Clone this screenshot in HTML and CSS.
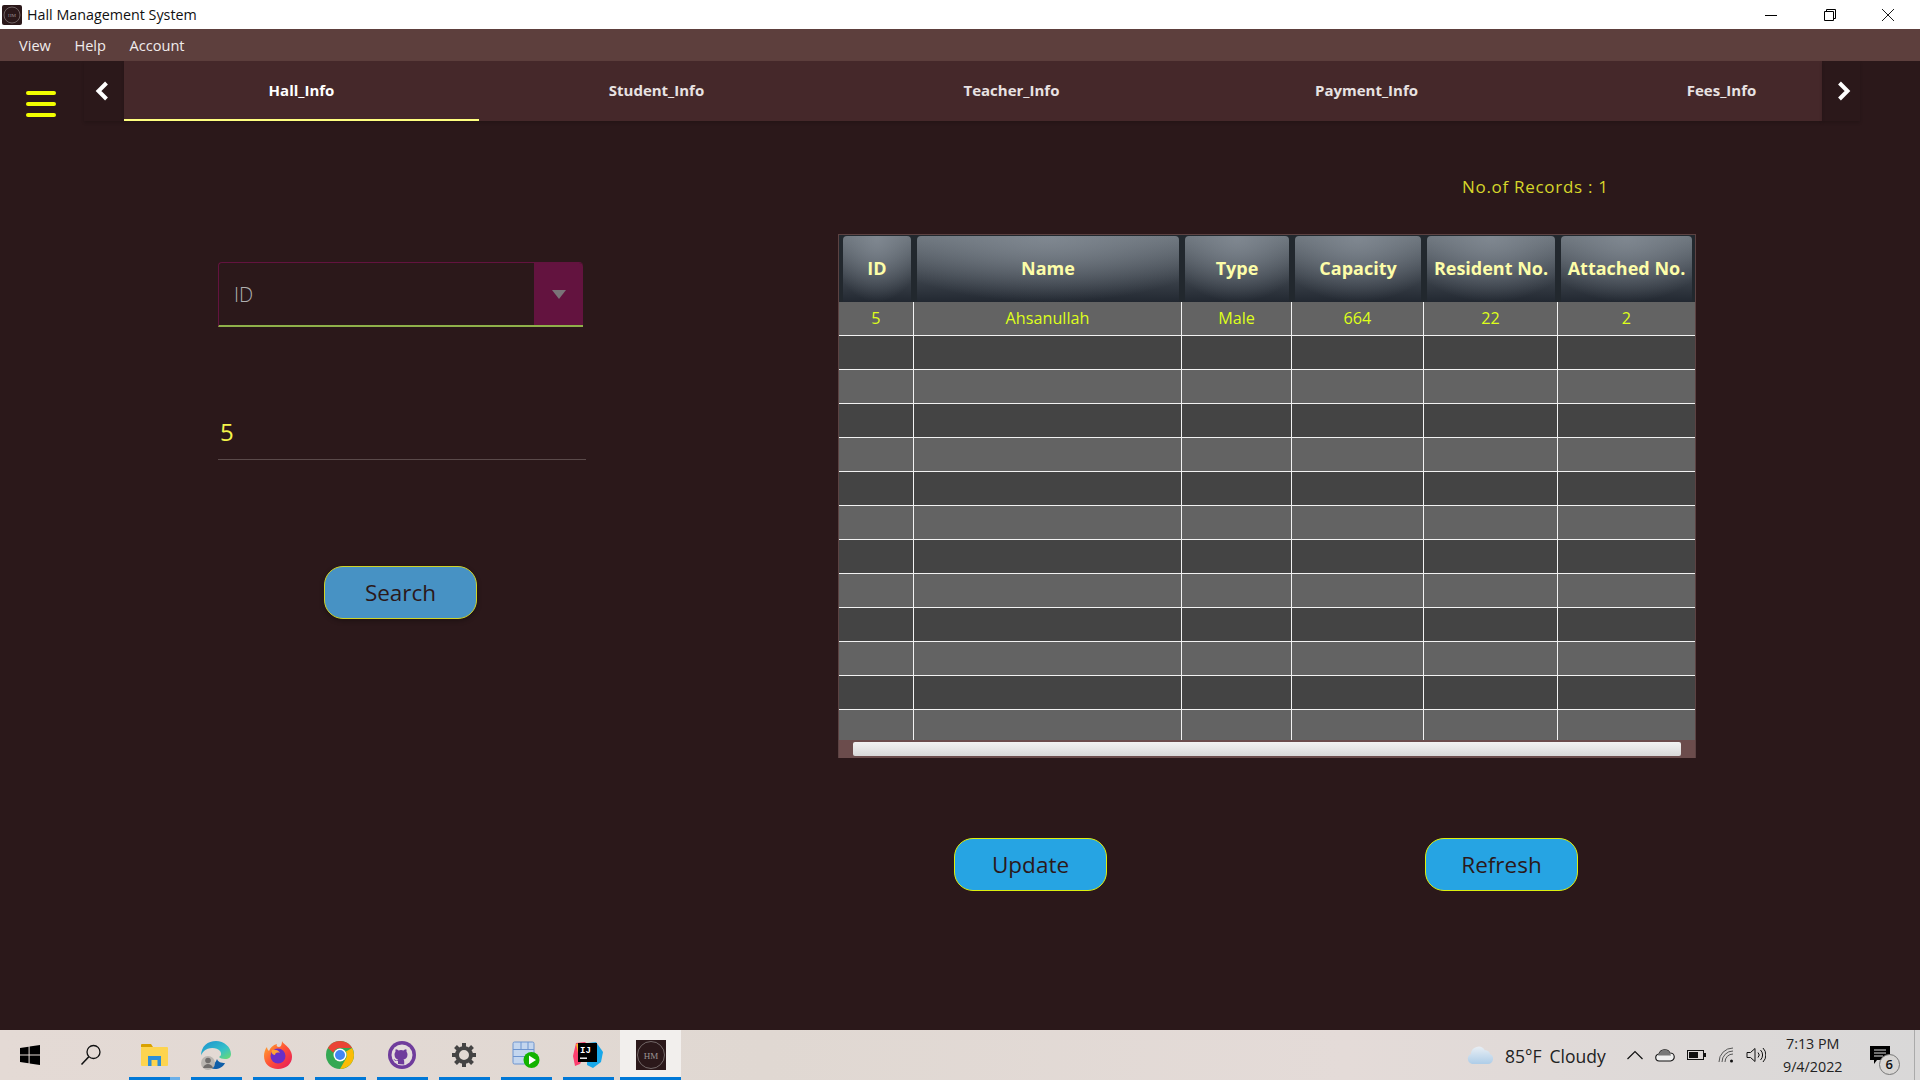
FILE: index.html

```html
<!DOCTYPE html>
<html lang="en">
<head>
  <meta charset="UTF-8">
  <title>Hall Management System</title>
  <link rel="stylesheet" href="styles.css">
</head>
<body>

  <div class="titlebar">
    <svg class="app-icon" viewBox="0 0 20 20">
      <rect width="20" height="20" rx="2" fill="#2b181a"/>
      <circle cx="10" cy="10" r="8" fill="none" stroke="#7d7373" stroke-width="0.8"/>
      <text x="10" y="12" font-size="5" text-anchor="middle" fill="#9a9090" font-family="Liberation Serif, serif">HM</text>
    </svg>
    <span class="app-title">Hall Management System</span>
    <div class="win-controls">
      <svg class="win-btn" viewBox="0 0 12 12"><path d="M0 6.5H12" stroke="#000" fill="none"/></svg>
      <svg class="win-btn" viewBox="0 0 12 12"><path d="M.5 2.5h9v9h-9zM2.5 2.5V.5h9v9h-2" stroke="#000" fill="none"/></svg>
      <svg class="win-btn" viewBox="0 0 12 12"><path d="M0 0L12 12M12 0L0 12" stroke="#000" stroke-width="0.9" fill="none"/></svg>
    </div>
  </div>

  <div class="menubar">
    <span class="menu-item">View</span>
    <span class="menu-item">Help</span>
    <span class="menu-item">Account</span>
  </div>

  <div class="tabrow">
    <div class="hamburger"><i></i><i></i><i></i></div>
    <div class="tab-arrow arrow-left">
      <svg viewBox="0 0 14 20" width="14" height="20"><path d="M11.500 2L3.500 10L11.500 18" fill="none" stroke="#fff" stroke-width="4"/></svg>
    </div>
    <div class="tabs">
      <div class="tab active">Hall_Info</div>
      <div class="tab">Student_Info</div>
      <div class="tab">Teacher_Info</div>
      <div class="tab">Payment_Info</div>
      <div class="tab">Fees_Info</div>
    </div>
    <div class="tab-arrow arrow-right">
      <svg viewBox="0 0 14 20" width="14" height="20"><path d="M2.500 2L10.500 10L2.500 18" fill="none" stroke="#fff" stroke-width="4"/></svg>
    </div>
  </div>

  <div class="main">
    <div class="search-panel">
      <div class="combo">
        <span class="combo-value">ID</span>
        <span class="combo-btn"><i class="combo-arrow"></i></span>
      </div>
      <div class="field">5</div>
      <button class="btn btn-search">Search</button>
    </div>

    <div class="table-panel">
      <div class="records">No.of Records : 1</div>
      <div class="table-box">
        <div class="table-clip">
          <table class="data">
            <thead>
              <tr>
                <th class="c-id"><div>ID</div></th>
                <th class="c-name"><div>Name</div></th>
                <th class="c-type"><div>Type</div></th>
                <th class="c-cap"><div>Capacity</div></th>
                <th class="c-res"><div>Resident No.</div></th>
                <th class="c-att"><div>Attached No.</div></th>
              </tr>
            </thead>
            <tbody>
              <tr><td>5</td><td>Ahsanullah</td><td>Male</td><td>664</td><td>22</td><td>2</td></tr>
              <tr><td></td><td></td><td></td><td></td><td></td><td></td></tr>
              <tr><td></td><td></td><td></td><td></td><td></td><td></td></tr>
              <tr><td></td><td></td><td></td><td></td><td></td><td></td></tr>
              <tr><td></td><td></td><td></td><td></td><td></td><td></td></tr>
              <tr><td></td><td></td><td></td><td></td><td></td><td></td></tr>
              <tr><td></td><td></td><td></td><td></td><td></td><td></td></tr>
              <tr><td></td><td></td><td></td><td></td><td></td><td></td></tr>
              <tr><td></td><td></td><td></td><td></td><td></td><td></td></tr>
              <tr><td></td><td></td><td></td><td></td><td></td><td></td></tr>
              <tr><td></td><td></td><td></td><td></td><td></td><td></td></tr>
              <tr><td></td><td></td><td></td><td></td><td></td><td></td></tr>
              <tr><td></td><td></td><td></td><td></td><td></td><td></td></tr>
            </tbody>
          </table>
        </div>
        <div class="hscroll"><div class="hscroll-thumb"></div></div>
      </div>
      <div class="table-actions">
        <button class="btn btn-action">Update</button>
        <button class="btn btn-action">Refresh</button>
      </div>
    </div>
  </div>

  <div class="taskbar">
    <div class="start">
      <svg viewBox="0 0 20 20" width="20" height="20"><path d="M0 3L8.600 1.800V9.400H0zM9.600 1.600L20 0V9.400H9.600zM0 10.400H8.600V18.200L0 17zM9.600 10.400H20V20L9.600 18.400z" fill="#000"/></svg>
    </div>
    <div class="search-ico">
      <svg viewBox="0 0 22 22" width="22" height="22"><circle cx="13.500" cy="8" r="6.500" fill="none" stroke="#111" stroke-width="1.300"/><path d="M8.800 12.800L1.500 20.500" stroke="#111" stroke-width="1.600"/></svg>
    </div>

    <div class="task-apps">
      <div class="task-app running first">
        <svg viewBox="0 0 28 24" width="28" height="24"><path d="M1 2a1 1 0 0 1 1-1h9l2 3H1z" fill="#d9a100"/><rect x="1" y="4" width="27" height="19" rx="1" fill="#fdd44f"/><path d="M8 23V13h13v10h-3.500v-6h-6v6z" fill="#2d8ed8"/></svg>
      </div>
      <div class="task-app running">
        <svg viewBox="0 0 32 30" width="32" height="30">
          <defs><linearGradient id="edgeG" x1="0" y1="0" x2="1" y2="1"><stop offset="0" stop-color="#1a8fd0"/><stop offset="0.6" stop-color="#35c1c9"/><stop offset="1" stop-color="#6fdc6a"/></linearGradient></defs>
          <path d="M1 16C1 6 8 1 16 1c8 0 15 6 15 13 0 3-2 5-6 5-3 0-5-1-6-2 2-1 3-3 1-6-3-4-12-4-16 0-2 2-3 4-3 5z" fill="url(#edgeG)"/>
          <path d="M17 19c1 3 4 4 8 4-2 4-6 6-10 6-3 0-5-1-7-2 4 0 7-3 9-8z" fill="#0f5ea8"/>
          <circle cx="8" cy="23" r="7" fill="#b9b5b0"/><circle cx="8" cy="20.500" r="2.800" fill="#706d6b"/><path d="M3 28c1-3 3-4 5-4s4 1 5 4z" fill="#706d6b"/>
        </svg>
      </div>
      <div class="task-app running">
        <svg viewBox="0 0 30 30" width="30" height="30">
          <defs><linearGradient id="foxG" x1="0" y1="0" x2="1" y2="1"><stop offset="0" stop-color="#ffb52a"/><stop offset="0.5" stop-color="#ff4f37"/><stop offset="1" stop-color="#e3175f"/></linearGradient></defs>
          <path d="M19 1c1 3 5 4 8 9 2 3 2 6 2 7 0 7-6 12-14 12S1 24 1 16c0-3 1-7 3-9 0 2 1 3 2 4 1-3 4-6 8-7-1 2 0 3 2 3 2 0 3-3 3-6z" fill="url(#foxG)"/>
          <circle cx="15" cy="16" r="7.500" fill="#6a2fc8"/><path d="M9 10c3-1 7 0 8 3-3-1-5 0-5 2-3 0-4-3-3-5z" fill="#ffa436"/>
        </svg>
      </div>
      <div class="task-app running">
        <svg viewBox="0 0 28 28" width="28" height="28">
          <circle cx="14" cy="14" r="14" fill="#34a853"/>
          <path d="M14 0A14 14 0 0 1 26.100 7H14a7 7 0 0 0-6.600 4.700L1.900 7A14 14 0 0 1 14 0z" fill="#ea4335"/>
          <path d="M26.100 7A14 14 0 0 1 14 28l6-10.500A7 7 0 0 0 20 10.500z" fill="#fbbc05"/>
          <circle cx="14" cy="14" r="6.500" fill="#fff"/><circle cx="14" cy="14" r="5" fill="#4285f4"/>
        </svg>
      </div>
      <div class="task-app running">
        <svg viewBox="0 0 28 28" width="28" height="28">
          <circle cx="14" cy="14" r="14" fill="#6f3c9c"/><circle cx="14" cy="14" r="10.500" fill="#e4dcdc"/>
          <path d="M10 23v-3c-3 .5-4-1-4.500-2 1 0 1.500 1 2.500 1.500 1 .3 2 0 2.200-.7C8 18 6.500 16.500 6.500 13.500c0-1 .4-2 1-2.700-.2-.8-.1-1.800.2-2.500 1 0 2 .5 2.800 1.100a11 11 0 0 1 5 0c.8-.6 1.800-1.100 2.800-1.100.3.700.4 1.700.2 2.500.6.700 1 1.700 1 2.700 0 3-1.500 4.500-4 5 .5.500.7 1 .7 2v3z" fill="#6f3c9c"/>
        </svg>
      </div>
      <div class="task-app running">
        <svg viewBox="0 0 24 24" width="24" height="24">
          <circle cx="12" cy="12" r="7" fill="none" stroke="#444" stroke-width="4"/>
          <path d="M12 0v5M12 19v5M0 12h5M19 12h5M3.500 3.500L7 7M17 17l3.500 3.500M3.500 20.500L7 17M17 7l3.500-3.500" stroke="#444" stroke-width="4"/>
        </svg>
      </div>
      <div class="task-app running">
        <svg viewBox="0 0 28 28" width="28" height="28">
          <rect x="1" y="1" width="21" height="22" rx="1.500" fill="#c4d6ee" stroke="#6d94cf"/>
          <path d="M1 8.500h21M1 15.500h21M9 1v7M16 1v7" stroke="#6d94cf" fill="none"/>
          <circle cx="19.500" cy="19" r="8" fill="#12b300"/><path d="M17 14.500l7 4.500-7 4.500z" fill="#fff"/>
        </svg>
      </div>
      <div class="task-app running">
        <svg viewBox="0 0 30 26" width="30" height="26">
          <path d="M3 1l9-1 4 4-9 18-5 2-2-10z" fill="#fc3f6e"/>
          <path d="M15 1l8-1 7 10-2 10-8 6-6-3z" fill="#18a8ea"/>
          <path d="M3 2l6-1 4 4-8 6z" fill="#ffb629"/>
          <rect x="5" y="1" width="19" height="19" fill="#000"/>
          <text x="7" y="11" font-size="9" font-weight="700" fill="#fff" font-family="Liberation Mono, monospace">IJ</text>
          <rect x="7" y="15.500" width="7" height="1.400" fill="#fff"/>
        </svg>
      </div>
      <div class="task-app running current">
        <svg viewBox="0 0 30 30" width="30" height="30">
          <rect width="30" height="30" fill="#2b181a"/>
          <circle cx="15" cy="15" r="13.500" fill="none" stroke="#7a7070" stroke-width="0.900"/>
          <text x="15" y="18.500" font-size="9" text-anchor="middle" fill="#9c9494" font-family="Liberation Serif, serif">HM</text>
        </svg>
      </div>
    </div>

    <div class="tray">
      <svg class="weather-ico" viewBox="0 0 24 17" width="27" height="18">
        <defs><linearGradient id="cloudG" x1="0" y1="0" x2="0" y2="1"><stop offset="0" stop-color="#e8eef4"/><stop offset="1" stop-color="#aecde8"/></linearGradient></defs>
        <path d="M5 17a5 5 0 0 1-1-9.500A7 7 0 0 1 17 4a5 5 0 0 1 5 3.500 5 5 0 0 1-2 9.500z" fill="url(#cloudG)"/>
      </svg>
      <span class="weather-text">85°F</span>
      <span class="weather-text">Cloudy</span>
      <svg class="tray-ico caret" viewBox="0 0 16 10" width="16" height="10"><path d="M.5 9L8 1.500 15.500 9" fill="none" stroke="#111" stroke-width="1.200"/></svg>
      <svg class="tray-ico onedrive" viewBox="0 0 20 14" width="20" height="14"><path d="M4.500 13a3.500 3.500 0 0 1-.5-7A6 6 0 0 1 15 5a4 4 0 0 1 .5 8z" fill="#efefef" stroke="#111" stroke-width="1.100"/><path d="M4 6A6 6 0 0 1 15 5l1 2.500H3z" fill="#777"/></svg>
      <svg class="tray-ico battery" viewBox="0 0 19 10" width="19" height="10"><rect x=".5" y=".5" width="16" height="9" fill="none" stroke="#111"/><rect x="2" y="2" width="9" height="6" fill="#111"/><rect x="17" y="3" width="2" height="4" fill="#111"/></svg>
      <svg class="tray-ico wifi" viewBox="0 0 16 16" width="16" height="16"><path d="M1 15A14 14 0 0 1 15 1M4 15A11 11 0 0 1 15 4M7 15A8 8 0 0 1 15 7" fill="none" stroke="#555" stroke-width="1"/><circle cx="13.500" cy="14" r="1.500" fill="#111"/></svg>
      <svg class="tray-ico speaker" viewBox="0 0 20 16" width="20" height="16"><path d="M1 5.500h3.500L9 1.500v13l-4.500-4H1z" fill="none" stroke="#111"/><path d="M12 5.500a3.500 3.500 0 0 1 0 5M14.500 3a7 7 0 0 1 0 10M17 1a10 10 0 0 1 0 14" fill="none" stroke="#111"/></svg>
      <div class="clock"><span>7:13 PM</span><span>9/4/2022</span></div>
      <div class="notify">
        <svg viewBox="0 0 20 18" width="20" height="18"><path d="M0 0h20v14H7l-3 4v-4H0z" fill="#000"/><path d="M4 4h12M4 7h12M4 10h9" stroke="#ddd" stroke-width="1"/></svg>
        <span class="notify-badge">6</span>
      </div>
      <div class="show-desktop"></div>
    </div>
  </div>

</body>
</html>
```

FILE: styles.css

```css
* {
  box-sizing: border-box;
}
html, body {
  margin: 0;
  height: 100%;
  overflow: hidden;
}
body {
  width: 1920px;
  height: 1080px;
  display: flex;
  flex-direction: column;
  background-color: #2b181a;
  font-family: 'Open Sans', 'Noto Sans', sans-serif;
}

/* window title */
.titlebar {
  height: 29px;
  background-color: #fff;
  display: flex;
  align-items: center;
  padding-left: 2px;
}
.app-icon {
  width: 20px;
  height: 20px;
}
.app-title {
  margin-left: 5px;
  font-size: 14.3px;
  color: #111;
}
.win-controls {
  margin-left: auto;
  display: flex;
  gap: 46.5px;
  padding-right: 26px;
}
.win-btn {
  width: 12px;
  height: 12px;
}

/* menu */
.menubar {
  height: 32px;
  background-color: #5d3f3d;
  display: flex;
  align-items: center;
  gap: 23.5px;
  padding-left: 19px;
}
.menu-item {
  font-size: 14.6px;
  color: #f0ecec;
}

/* tabs */
.tabrow {
  height: 60px;
  display: flex;
}
.hamburger {
  width: 84px;
  padding: 30px 0 0 26px;
}
.hamburger i {
  display: block;
  width: 30px;
  height: 4px;
  margin-bottom: 7px;
  border-radius: 2px;
  background-color: #f2ff00;
}
.tab-arrow {
  display: flex;
  align-items: flex-start;
  padding-top: 20px;
  box-shadow: 0 2px 3px rgba(0, 0, 0, 0.15);
}
.arrow-left {
  width: 40px;
  padding-left: 11px;
}
.arrow-right {
  width: 38px;
  padding-left: 15px;
}
.tabs {
  width: 1698px;
  display: flex;
  overflow: hidden;
  background-color: #45282a;
  box-shadow: 0 2px 3px rgba(0, 0, 0, 0.15);
}
.tab {
  flex: 0 0 355px;
  display: flex;
  align-items: center;
  justify-content: center;
  padding-bottom: 2px;
  font-size: 15px;
  font-weight: 700;
  color: #e8e2e2;
}
.tab.active {
  color: #fff;
  border-bottom: 2px solid #ffff80;
  padding-bottom: 0;
}

/* main area */
.main {
  flex: 1;
  display: flex;
}
.search-panel {
  width: 838px;
  padding: 141px 0 0 218px;
}
.combo {
  width: 365px;
  height: 65px;
  display: flex;
  border-top: 1px solid #63133f;
  border-left: 1px solid #63133f;
  border-bottom: 2px solid #8fb04a;
  border-radius: 4px 4px 0 0;
}
.combo-value {
  flex: 1;
  padding-left: 15px;
  font-size: 20px;
  font-weight: 300;
  line-height: 63px;
  color: #b0b0b0;
}
.combo-btn {
  width: 49px;
  background-color: #63133f;
  border-radius: 0 4px 0 0;
  display: flex;
  align-items: center;
  justify-content: center;
}
.combo-arrow {
  width: 0;
  height: 0;
  border-left: 7.5px solid transparent;
  border-right: 7.5px solid transparent;
  border-top: 9px solid #7a7478;
}
.field {
  width: 368px;
  height: 60px;
  margin-top: 73px;
  padding: 2px 0 0 2px;
  border-bottom: 1px solid #5a4a4a;
  font-size: 24px;
  line-height: 60px;
  color: #f5f54a;
}
.btn {
  width: 153px;
  height: 53px;
  padding: 0;
  border-radius: 19px;
  font-family: inherit;
  font-size: 22.5px;
  color: #2b181a;
  cursor: pointer;
}
.btn-search {
  display: block;
  margin: 106px 0 0 106px;
  background-color: #4792c4;
  border: 1.5px solid #cfd42a;
  box-shadow: 0 2px 5px rgba(0, 0, 0, 0.3);
}
.btn-action {
  background-color: #26a4e3;
  border: 1.5px solid #dcef10;
}

/* table side */
.table-panel {
  width: 858px;
}
.records {
  height: 113px;
  padding: 52px 0 0 624px;
  font-size: 17px;
  letter-spacing: 0.7px;
  line-height: 28px;
  color: #d6d62a;
  white-space: nowrap;
}
.table-box {
  height: 524px;
  border: 1px solid #5c4242;
  background-color: #22282e;
}
.table-clip {
  height: 505px;
  overflow: hidden;
}
table.data {
  width: 856px;
  border-collapse: separate;
  border-spacing: 0;
  table-layout: fixed;
}
.c-id { width: 75px; }
.c-name { width: 268px; }
.c-type { width: 110px; }
.c-cap { width: 132px; }
.c-res { width: 134px; }
.c-att { width: 137px; }
th {
  height: 67px;
  padding: 1px 3px 0;
  background-color: #22282e;
}
th.c-id {
  padding-left: 4px;
}
th div {
  height: 66px;
  padding-bottom: 2px;
  display: flex;
  align-items: center;
  justify-content: center;
  border-radius: 4px 4px 0 0;
  background: radial-gradient(ellipse 70% 100% at 50% 0, rgba(130, 138, 147, 0.9), rgba(130, 138, 147, 0) 100%), linear-gradient(#6b737b, #222831);
  font-size: 18px;
  font-weight: 700;
  color: #fdfda8;
  white-space: nowrap;
}
td {
  height: 34px;
  padding: 0 0 2px;
  border-right: 1px solid #f2f2f2;
  border-bottom: 1px solid #f2f2f2;
  text-align: center;
  font-size: 16.2px;
  color: #dfff1a;
}
td:last-child {
  border-right: none;
}
tbody tr:nth-child(odd) td {
  background-color: #636363;
}
tbody tr:nth-child(even) td {
  background-color: #444;
}
.hscroll {
  height: 18px;
  padding: 2px 14px 2px 14px;
  background-color: #6b4c4c;
}
.hscroll-thumb {
  height: 14px;
  border-radius: 2px;
  background: linear-gradient(#f2f2f2, #d8d8d8);
}
.table-actions {
  display: flex;
  gap: 318px;
  padding: 80px 0 0 116px;
}

/* windows taskbar */
.taskbar {
  height: 50px;
  display: flex;
  align-items: center;
  background: linear-gradient(90deg, #e4dad5, #e0d8d2 40%, #e4dbd8 70%, #d9d8d8);
}
.start {
  width: 80px;
  padding-left: 20px;
  display: flex;
}
.search-ico {
  width: 49px;
  display: flex;
}
.task-apps {
  display: flex;
  height: 100%;
}
.task-app {
  width: 51px;
  margin-right: 11px;
  display: flex;
  align-items: center;
  justify-content: center;
  padding: 2px 2px 0 0;
}
.task-app.running {
  border-bottom: 3px solid #0078d7;
}
.task-app.first {
  border-image: linear-gradient(90deg, #0078d7 80%, #6cb0e8 80%) 1;
}
.task-app.current {
  width: 61px;
  margin: 0 0 0 -5px;
  padding-right: 0;
  background-color: #f2efed;
}
.tray {
  flex: 1;
  display: flex;
  align-items: center;
  height: 100%;
  padding-left: 785px;
}
.weather-ico {
  margin-right: 12px;
}
.weather-text {
  padding-top: 2px;
  margin-right: 8px;
  font-size: 17.5px;
  color: #222;
}
.tray-ico {
  margin-left: 12px;
}
.caret {
  margin-left: 13px;
}
.clock {
  margin-left: 12px;
  width: 70px;
  display: flex;
  flex-direction: column;
  align-items: center;
  font-size: 14.3px;
  line-height: 23px;
  color: #222;
}
.notify {
  position: relative;
  margin-left: 22px;
  display: flex;
}
.notify-badge {
  position: absolute;
  left: 9px;
  top: 8px;
  width: 21px;
  height: 21px;
  border-radius: 50%;
  border: 1px solid #777;
  background-color: #d8d6d4;
  font-size: 13px;
  font-weight: 600;
  line-height: 19px;
  text-align: center;
  color: #111;
}
.show-desktop {
  margin-left: auto;
  width: 6px;
  height: 100%;
  border-left: 1px solid #aaa;
}
```
